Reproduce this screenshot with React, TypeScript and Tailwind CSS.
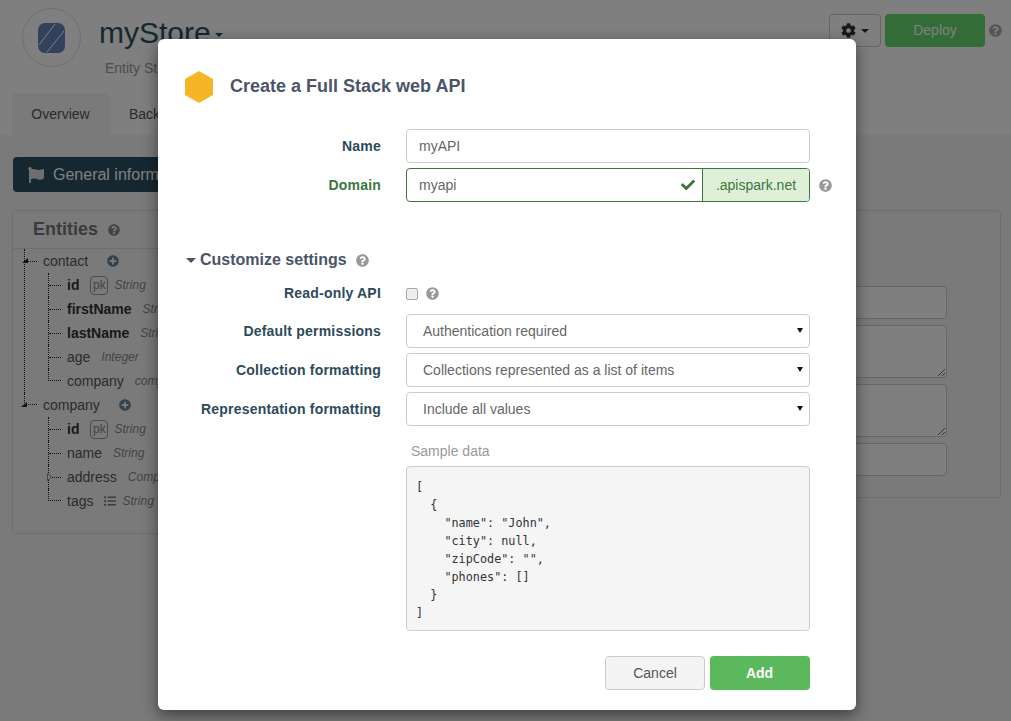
import React from "react";
import { FaCheck, FaCog, FaFlag, FaListUl, FaPlusCircle, FaQuestionCircle } from "react-icons/fa";

const Field: React.FC<{ label: string; green?: boolean; children: React.ReactNode }> = ({ label, green, children }) => (
  <div className="flex items-center">
    <label className={green ? "w-[223px] text-right text-[14px] font-bold tracking-[0.2px] text-[#3c763d]" : "w-[223px] text-right text-[14px] font-bold tracking-[0.2px] text-[#2c4a5a]"}>
      {label}
    </label>
    <div className="ml-[25px] flex items-center">{children}</div>
  </div>
);

const Select: React.FC<{ value: string }> = ({ value }) => (
  <div className="relative flex h-[34px] w-[404px] items-center rounded border border-[#ccc] pl-4 text-[14px] text-[#666]">
    {value}
    <svg viewBox="0 0 6 5" className="absolute right-[6px] top-[13px] h-[5px] w-[6px]">
      <path d="M0 0h6L3 5z" fill="#111" />
    </svg>
  </div>
);

const Row: React.FC<{ last?: boolean; open?: boolean; closed?: boolean; children: React.ReactNode }> = ({ last, open, closed, children }) => (
  <div className={last ? "relative flex h-6 items-center" : "relative flex h-6 items-center border-l border-dotted border-[#222]"}>
    <span className={last ? "mr-[6px] h-3 w-[13px] self-start border-b border-l border-dotted border-[#222]" : "mr-[6px] w-[12px] border-t border-dotted border-[#222]"} />
    {open && (
      <svg viewBox="0 0 6 5" className="absolute -left-[3px] top-[9px] h-[5px] w-[6px]">
        <path d="M6 0v5H0z" fill="#222" />
      </svg>
    )}
    {closed && (
      <svg viewBox="0 0 5 8" className="absolute -left-[2px] top-2 h-2 w-[5px]">
        <path d="M.5.5l4 3.5-4 3.5z" fill="#fff" stroke="#888" />
      </svg>
    )}
    {children}
  </div>
);

const Attr: React.FC<{ name: string; type: string; bold?: boolean; pk?: boolean; list?: boolean; last?: boolean; closed?: boolean }> = ({ name, type, bold, pk, list, last, closed }) => (
  <Row last={last} closed={closed}>
    <span className={bold ? "text-[14px] font-bold text-[#333]" : "text-[14px] text-[#555]"}>{name}</span>
    {pk && <span className="ml-[11px] flex h-[19px] w-[18px] items-center justify-center rounded-sm border border-[#999] text-[12px] text-[#888]">pk</span>}
    {list && <FaListUl className="ml-[11px] text-[12px] text-[#777]" />}
    <span className={pk || list ? "ml-[6px] text-[12px] italic text-[#888]" : "ml-[11px] text-[12px] italic text-[#888]"}>{type}</span>
  </Row>
);

const App: React.FC = () => {
  return (
    <div className="relative flex h-screen flex-col overflow-hidden bg-white font-['Liberation_Sans',Arial,sans-serif]">
      <header className="flex h-[93px] shrink-0 items-start justify-between pl-[22px] pr-[9px] pt-2">
        <div className="flex">
          <div className="flex h-[59px] w-[59px] items-center justify-center rounded-full border border-[#ddd]">
            <svg viewBox="0 0 27 30" className="h-[30px] w-[27px]">
              <rect width="27" height="30" rx="7" fill="#6682b8" />
              <path d="M1 22L17 1M9 29L26 8" stroke="#fff" strokeWidth="1" />
            </svg>
          </div>
          <div className="ml-[18px]">
            <div className="flex items-center text-[30px] leading-[50px] text-[#2a5064]">
              myStore
              <span className="ml-1 mt-1 border-x-[4px] border-t-[4px] border-x-transparent border-t-[#2a5064]" />
            </div>
            <div className="ml-[6px] text-[14px] text-[#999]">Entity Store</div>
          </div>
        </div>
        <div className="flex items-center pt-[5px]">
          <button className="mt-px flex h-[33px] w-[52px] items-center justify-center rounded border border-[#ccc] bg-white">
            <FaCog className="text-[15px] text-[#333]" />
            <span className="ml-[5px] border-x-[4px] border-t-[4px] border-x-transparent border-t-[#333]" />
          </button>
          <button className="ml-1 mt-px h-[33px] w-[100px] rounded bg-[#66d96f] text-[14px] text-white">Deploy</button>
          <FaQuestionCircle className="ml-[4px] text-[13px] text-[#aaa]" />
        </div>
      </header>

      <nav className="flex h-[42px] shrink-0 pl-3 text-[14px]">
        <div className="flex w-[98px] items-center justify-center rounded-t bg-[#f5f5f5] pr-px text-[#555]">Overview</div>
        <div className="ml-[19px] flex items-center text-[#555]">Backend</div>
      </nav>

      <main className="flex-1 bg-[#f5f5f5] pl-3 pr-[10px] pt-[22px]">
        <button className="ml-px flex h-[35px] w-[240px] items-center rounded bg-[#2a5064] pl-[15px] text-[16px] text-white">
          <FaFlag className="mr-[9px] text-[16px] text-[#ddd]" />
          General information
        </button>
        <div className="mt-[18px] flex items-start gap-3">
          <section className="h-[324px] w-[390px] shrink-0 rounded border border-[#ddd]">
            <div className="flex h-[38px] items-center border-b border-[#ddd] pl-5">
              <h3 className="text-[18px] font-bold text-[#777]">Entities</h3>
              <FaQuestionCircle className="ml-[10px] text-[12px] text-[#888]" />
            </div>
            <div className="pl-[11px]">
              <div className="border-l border-dotted border-[#222]">
                <div className="-ml-px">
                  <Row open>
                    <span className="text-[14px] text-[#555]">contact</span>
                    <FaPlusCircle className="ml-[19px] text-[12px] text-[#67859c]" />
                  </Row>
                </div>
                <div className="ml-[23px]">
                  <Attr name="id" type="String" bold pk />
                  <Attr name="firstName" type="String" bold />
                  <Attr name="lastName" type="String" bold />
                  <Attr name="age" type="Integer" />
                  <Attr name="company" type="company" last />
                </div>
              </div>
              <Row last open>
                <span className="text-[14px] text-[#555]">company</span>
                <FaPlusCircle className="ml-[19px] text-[12px] text-[#67859c]" />
              </Row>
              <div className="ml-6">
                <Attr name="id" type="String" bold pk />
                <Attr name="name" type="String" />
                <Attr name="address" type="Complex" closed />
                <Attr name="tags" type="String" list last />
              </div>
            </div>
          </section>
          <section className="flex h-[288px] flex-1 flex-col gap-[6px] rounded border border-[#ddd] pl-[20px] pr-[53px] pt-[75px]">
            <input readOnly className="h-[33px] w-full shrink-0 rounded border border-[#ccc] bg-white" />
            <textarea readOnly className="h-[53px] w-full shrink-0 rounded border border-[#ccc] bg-white" />
            <textarea readOnly className="h-[53px] w-full shrink-0 rounded border border-[#ccc] bg-white" />
            <input readOnly className="h-[33px] w-full shrink-0 rounded border border-[#ccc] bg-white" />
          </section>
        </div>
      </main>

      <div className="absolute inset-0 bg-black/50" />

      <div className="absolute left-[158px] top-[39px] h-[671px] w-[698px] rounded-md bg-white shadow-[0_5px_15px_rgba(0,0,0,0.5)]">
        <div className="flex items-center pl-[27px] pt-8">
          <svg viewBox="0 0 28 32" className="h-8 w-7">
            <path d="M14 0l14 8v16l-14 8L0 24V8z" fill="#f4b526" />
          </svg>
          <h2 className="-mt-[2px] ml-[17px] text-[18px] font-bold text-[#4a5568]">Create a Full Stack web API</h2>
        </div>

        <div className="mt-[26px] flex flex-col gap-[5px]">
          <Field label="Name">
            <input readOnly value="myAPI" className="h-[34px] w-[404px] rounded border border-[#ccc] px-3 text-[14px] text-[#666]" />
          </Field>
          <Field label="Domain" green>
            <div className="flex h-[34px] w-[404px] rounded border border-[#3c763d]">
              <div className="flex flex-1 items-center justify-between pl-3 pr-[7px] text-[14px] text-[#666]">
                myapi
                <FaCheck className="text-[14px] text-[#3c763d]" />
              </div>
              <div className="flex w-[107px] items-center justify-center rounded-r-[3px] border-l border-[#3c763d] bg-[#dff0d8] text-[14px] text-[#3c763d]">.apispark.net</div>
            </div>
            <FaQuestionCircle className="ml-[9px] text-[13px] text-[#999]" />
          </Field>
        </div>

        <div className="mt-[46px] flex items-center pl-[28px]">
          <span className="border-x-[5px] border-t-[5px] border-x-transparent border-t-[#4a5568]" />
          <h3 className="ml-[4px] text-[16px] font-bold text-[#4a5568]">Customize settings</h3>
          <FaQuestionCircle className="ml-[9px] text-[13px] text-[#999]" />
        </div>

        <div className="mt-[6px] flex flex-col gap-[5px]">
          <div className="flex h-[31px] items-center">
            <Field label="Read-only API">
              <input type="checkbox" className="h-3 w-3 appearance-none rounded-[2px] border border-[#aaa] bg-[#eee]" />
              <FaQuestionCircle className="ml-[8px] text-[13px] text-[#999]" />
            </Field>
          </div>
          <Field label="Default permissions">
            <Select value="Authentication required" />
          </Field>
          <Field label="Collection formatting">
            <Select value="Collections represented as a list of items" />
          </Field>
          <Field label="Representation formatting">
            <Select value="Include all values" />
          </Field>
        </div>

        <div className="ml-[248px] mt-4 w-[404px]">
          <div className="pl-[5px] text-[14px] leading-[18px] text-[#999]">Sample data</div>
          <pre className="mt-[6px] h-[165px] rounded border border-[#ccc] bg-[#f5f5f5] px-[9px] pt-[11px] font-['DejaVu_Sans_Mono',monospace] text-[11.8px] leading-[18px] text-[#333]">{`[
  {
    "name": "John",
    "city": null,
    "zipCode": "",
    "phones": []
  }
]`}</pre>
        </div>

        <div className="ml-[447px] mt-[25px] flex gap-[5px]">
          <button className="h-[34px] w-[100px] rounded border border-[#ccc] bg-[#f4f4f4] text-[14px] text-[#555]">Cancel</button>
          <button className="h-[34px] w-[100px] rounded bg-[#5cb85c] pr-px text-[14px] font-bold text-white">Add</button>
        </div>
      </div>
    </div>
  );
};

export default App;
